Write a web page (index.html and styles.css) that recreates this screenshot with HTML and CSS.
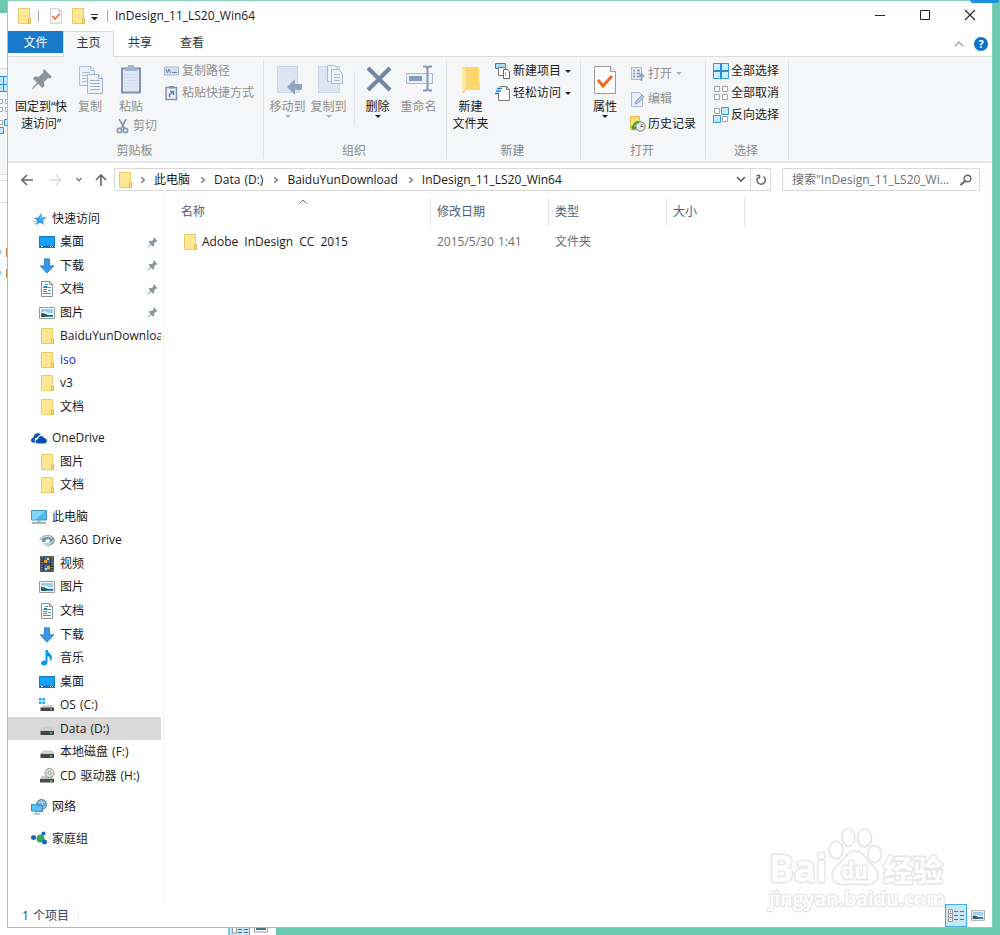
FILE: index.html
```
<!DOCTYPE html>
<html lang="zh-CN">
<head>
    <meta charset="UTF-8">
    <meta name="viewport" content="width=device-width, initial-scale=1.0">
    <title>InDesign_11_LS20_Win64</title>
    <link rel="stylesheet" href="styles.css">
</head>
<body>
    <!-- Shared icons -->
    <svg class="sprite" aria-hidden="true">
        <symbol id="folder" viewBox="0 0 16 16">
            <path d="M2.500.5h11v9.500l1 1v4.500h-12z" fill="#ffe793" stroke="#eccb67"/>
            <path d="M12.500 15.500v-4.500l1-1 1 1v4.500z" fill="#ffe082" stroke="#dfb84c"/>
        </symbol>
        <symbol id="pin" viewBox="0 0 16 16">
            <path d="M10 .5l5.500 5.500-1.500 1-1-.3-2.700 2.700.3 3-1.800 1.600-2.800-2.900L2 15l-1.500.8.7-1.500 3.900-4.200L2.300 7.300l1.700-1.800 3.200.2 2.500-2.600L9 2z" fill="#8b979f"/>
        </symbol>
        <symbol id="desktop" viewBox="0 0 16 16">
            <path d="M.5 2.500h15v11H.5z" fill="#16a1fa" stroke="#0878c7"/>
            <path d="M1 12.500h14" stroke="#0860ae"/>
            <path d="M2 12.500h2M11 12.500h1M13 12.500h1" stroke="#fff"/>
        </symbol>
        <symbol id="download" viewBox="0 0 16 16">
            <path d="M5 .5h6v7h4.500L8 15.500.5 7.500H5z" fill="#3997e5"/>
            <path d="M5.500 1h5v7h4L8 15 1.500 8h4z" fill="none" stroke="#2581d1" stroke-width=".7"/>
        </symbol>
        <symbol id="document" viewBox="0 0 16 16">
            <path d="M2.500.5h8l3 3v12h-11z" fill="#fff" stroke="#8d9295"/>
            <path d="M10.500.5v3h3" fill="none" stroke="#8d9295"/>
            <path d="M6 3.500h3M4 6.500h8M4 8.500h4M4 10.500h4M4 12.500h8M9 9.500h3" stroke="#3796ce"/>
            <path d="M5 5.500h3" stroke="#1d6fa8"/>
        </symbol>
        <symbol id="picture" viewBox="0 0 16 16">
            <path d="M.5 2.500h15v11H.5z" fill="#fff" stroke="#999"/>
            <path d="M2 4h12v8H2z" fill="#9bcdf4"/>
            <path d="M2 7.500l4-1 4 1.500 4 .5V10H2z" fill="#e3f3fb"/>
            <path d="M2 8l3 .3 4 1.700h5v2H2z" fill="#285f64"/>
            <path d="M8 11.500h6" stroke="#3b88c2"/>
        </symbol>
        <symbol id="onedrive" viewBox="0 0 16 16">
            <path d="M1.500 12.500C-1 11-.2 7.800 2.500 7.700 2.500 4 7.500 1.600 10 5c-2-.2-3.200.8-3.700 2.500C3.500 7.300 3 11 4.700 12.700z" fill="#0a50b4"/>
            <path d="M6.500 13.500c-2.600-.3-2.400-4.300.6-4.600.3-3.600 5-4 6-.8 3.500.2 3.700 5.400.4 5.400z" fill="#0a50b4"/>
        </symbol>
        <symbol id="computer" viewBox="0 0 16 16">
            <path d="M.5 1.500h15v9.500H.5z" fill="#4abaf3" stroke="#4b92bd"/>
            <path d="M1 2h13L5 10.500H1z" fill="#80d6fb"/>
            <path d="M6 11.500h4v1.500H6z" fill="#a4b5c0"/>
            <path d="M1 14h14" stroke="#8096a3" stroke-width="1.400"/>
        </symbol>
        <symbol id="a360" viewBox="0 0 16 16">
            <path d="M0 7.500C4 2 11 2 14 5c3 3 2 7-3 8.500-3 .8-5.500-.5-7-2 4 .5 7-.5 7-2.500 0-1.500-1.500-2-3-1.500C6 8 6 9 7 10 3 11 2 9 3 7.500z" fill="#7099ac"/>
            <path d="M1 7c5-4 10-3 12-1M5 12c5 1 9-1 9-4" fill="none" stroke="#c2d9e0" stroke-width="1.500"/>
        </symbol>
        <symbol id="video" viewBox="0 0 16 16">
            <path d="M1.500.5h13v15h-13z" fill="#333c45" stroke="#555"/>
            <path d="M3 1v14M13 1v14" stroke="#ddd" stroke-dasharray="1 1.500"/>
            <path d="M5 1h6v6H5zM5 8.500h6V15H5z" fill="#346bb8"/>
            <path d="M5 4h3v3H5zM8 10h3v3H8z" fill="#e7a736"/>
            <path d="M8 2h2v2H8zM6 12h2v2H6z" fill="#f2dd56"/>
        </symbol>
        <symbol id="music" viewBox="0 0 16 16">
            <path d="M6.500 0h2c.3 3 4.500 4 4.500 7.500 0 2-1 3.200-2 4 .8-3.200-.5-5-2.500-5.500V12c0 4.500-6.500 4.500-6.500 1.300 0-2 2.500-3.300 4.500-2.500z" fill="#0b97ec"/>
        </symbol>
        <symbol id="drive" viewBox="0 0 16 16">
            <path d="M4 7h9l2 3H1.500z" fill="#d6d6d6" stroke="#aaa" stroke-width=".5"/>
            <path d="M1.500 10H15v4H1.500z" fill="#454545"/>
            <path d="M11 12h2" stroke="#37e34d" stroke-width="1.500"/>
        </symbol>
        <symbol id="osdrive" viewBox="0 0 16 16">
            <path d="M0 1h2.600v2.600H0zM3.400 1H6v2.600H3.400zM0 4.400h2.600V7H0zM3.400 4.400H6V7H3.400z" fill="#11b0f1"/>
            <path d="M4 8h9l2 2.500H1.500z" fill="#d2d2d2"/>
            <path d="M1.500 10.500H15V14H1.500z" fill="#454545"/>
            <path d="M11 12.500h2" stroke="#37e34d" stroke-width="1.500"/>
        </symbol>
        <symbol id="cd" viewBox="0 0 16 16">
            <path d="M3 8h10l2 3H1z" fill="#c4c4c4"/>
            <circle cx="10.500" cy="5" r="4.500" fill="#dedede" stroke="#999"/>
            <circle cx="10.500" cy="5" r="1.500" fill="#fff" stroke="#999"/>
            <path d="M1 11h14v3.500H1z" fill="#4b4b4b"/>
            <path d="M11 13h2" stroke="#37e34d" stroke-width="1.500"/>
        </symbol>
        <symbol id="network" viewBox="0 0 16 16">
            <circle cx="10.500" cy="5.500" r="5" fill="#71a8c9" stroke="#4b86aa"/>
            <path d="M7 3c3 1 5-1 7 1M10 1c2 3 1 6 3 8" fill="none" stroke="#c1e1ed"/>
            <path d="M.5 5.500l11 1v6l-11-.5z" fill="#5ac0f3" stroke="#3a83b7"/>
            <path d="M5 12.500v2M3 15h6" stroke="#7895a6"/>
        </symbol>
        <symbol id="homegroup" viewBox="0 0 16 16">
            <path d="M2.500 6.500L10 8l2.500-5.500M10 8l3 4" stroke="#b6c4cd" fill="none"/>
            <circle cx="2.500" cy="6.500" r="2.500" fill="#1968bb"/>
            <circle cx="12.500" cy="2.500" r="2" fill="#1968bb"/>
            <circle cx="9.500" cy="7.500" r="4" fill="#37a854"/>
            <circle cx="13.500" cy="11" r="2.500" fill="#1968bb"/>
        </symbol>
        <symbol id="star" viewBox="0 0 16 16">
            <path d="M10 2l1.100 4 4.400.5-3.500 2.700 1 4.800-4-2.500-4.300 2.700 1.300-4.400L3 7l4.300-.6z" fill="#2b9fe8"/>
            <path d="M10 2l1.100 4 4.400.5L8.500 9z" fill="#56bcf8"/>
            <path d="M2 10.500h3M3 12.500h2" stroke="#8bcdf4"/>
        </symbol>
        <symbol id="chevron" viewBox="0 0 6 8">
            <path d="M1.200 1.200L4.200 4l-3 2.800" fill="none" stroke="#777" stroke-width="1.400"/>
        </symbol>
        <symbol id="check" viewBox="0 0 24 30">
            <path d="M1.500 1.500h16l5 5v22h-21z" fill="#fcfcfc" stroke="#999"/>
            <path d="M17.500 1.500v5h5" fill="#eee" stroke="#999"/>
            <path d="M5 15l5 6 9-10" fill="none" stroke="#f0641e" stroke-width="2.800"/>
        </symbol>
    </svg>

    <!-- Window behind -->
    <div class="back-window">
        <div class="back-title"></div>
        <div class="back-ribbon">
            <svg width="7" height="66" viewBox="0 0 7 66">
                <path d="M0 7h7v16H0z" fill="#bfe5fc"/>
                <path d="M0 7.500h7M0 15.500h7M0 22.500h7M3.500 7v16" stroke="#2793df"/>
                <path d="M-1 30.500h3.500v4H-1zM5.500 30.500h4v4h-4zM-1 38.500h3.500v4H-1zM5.500 38.500h4v4h-4zM-1 51.500h3.500v4H-1z" fill="#fff" stroke="#aaa"/>
                <path d="M4.500 50.500h5v6h-5zM-1 58.500h4.500v6H-1z" fill="#c7e8fb" stroke="#2793df"/>
            </svg>
        </div>
        <div class="back-address"></div>
        <div class="back-files">
            <svg width="7" height="34" viewBox="0 0 7 34">
                <circle cx="-1" cy="6" r="2.500" fill="#8dc9ee"/>
                <circle cx="-1" cy="27" r="2.500" fill="#8dc9ee"/>
                <path d="M6 2h1v9H6zM6 23h1v9H6z" fill="#c28a4d"/>
            </svg>
        </div>
        <div class="back-status">
            <svg width="48" height="7" viewBox="0 0 48 7">
                <path d="M0 0h22v7H0z" fill="#c7e6f4"/>
                <path d="M1 0v7M21.500 0v7" stroke="#42aee4"/>
                <path d="M4.500-1h4v6h-4z" fill="#fff" stroke="#999"/>
                <path d="M10 4.500h4M16 4.500h4M10 1.500h4M16 1.500h4" stroke="#667"/>
                <path d="M26.500-1h13v5h-13z" fill="#fff" stroke="#999"/>
                <path d="M28 0h10v2H28z" fill="#41718c"/>
            </svg>
        </div>
    </div>
    <div class="blue-tab"></div>

    <div class="window">
        <div class="titlebar">
            <svg class="icon" width="16" height="16"><use href="#folder"/></svg>
            <span class="title-sep"></span>
            <svg class="title-check" width="14" height="16"><use href="#check"/></svg>
            <svg class="icon" width="16" height="16"><use href="#folder"/></svg>
            <svg class="title-more" width="7" height="7" viewBox="0 0 7 7"><path d="M0 .5h7" stroke="#333"/><path d="M0 3h7L3.500 6.500z" fill="#222"/></svg>
            <span class="title-sep"></span>
            <span class="title-text">InDesign_11_LS20_Win64</span>
            <div class="window-buttons">
                <svg width="12" height="12" viewBox="0 0 12 12"><path d="M1 6.500h10" stroke="#222"/></svg>
                <svg width="12" height="12" viewBox="0 0 12 12"><path d="M1.500 1.500h9v9h-9z" fill="none" stroke="#222"/></svg>
                <svg width="12" height="12" viewBox="0 0 12 12"><path d="M1 1l10 10M11 1L1 11" stroke="#222" stroke-width="1.100"/></svg>
            </div>
        </div>

        <div class="tabs">
            <div class="tab tab-file">文件</div>
            <div class="tab tab-active">主页</div>
            <div class="tab">共享</div>
            <div class="tab">查看</div>
            <div class="tabs-right">
                <svg width="10" height="6" viewBox="0 0 10 6"><path d="M1 5l4-4 4 4" fill="none" stroke="#999" stroke-width="1.200"/></svg>
                <span class="help">?</span>
            </div>
        </div>

        <div class="ribbon">
            <div class="group group-clipboard">
                <div class="group-body">
                    <div class="big-button">
                        <svg width="24" height="30" viewBox="0 0 24 30"><path d="M15 4l8 8-2 1.500-2-.4-4 4 .4 4-2.100 2-4.200-4.400L4 24l-1 .5.500-1.500L8 17.500l-4.200-4 2-2 4 .2 4.500-4.300L14 5.500z" fill="#89959e"/></svg>
                        <span>固定到“快<br>速访问”</span>
                    </div>
                    <div class="big-button disabled">
                        <svg class="shift-icon" width="26" height="30" viewBox="0 0 26 30">
                            <path d="M1.500 1.500h11l4 4v15h-15z" fill="#edf3fa" stroke="#a9bcd8"/>
                            <path d="M12.500 1.500v4h4M4 7.500h8M4 10.500h8M4 13.500h8M4 16.500h6" fill="none" stroke="#a9bcd8"/>
                            <path d="M9.500 9.500h11l4 4v15h-15z" fill="#edf3fa" stroke="#a2b4d0"/>
                            <path d="M20.500 9.500v4h4M12 15.500h10M12 18.500h10M12 21.500h10M12 24.500h10" fill="none" stroke="#9eb3d3"/>
                        </svg>
                        <span>复制</span>
                    </div>
                    <div class="paste-column disabled">
                        <div class="big-button">
                            <svg width="22" height="30" viewBox="0 0 22 30">
                                <path d="M2 3.500h18v24H2z" fill="#dde8f4" stroke="#7f93b5" stroke-width="2"/>
                                <path d="M4 9.500h14M4 12.500h14M4 15.500h14M4 18.500h14M4 21.500h14" stroke="#cfddee"/>
                                <path d="M5 2h3V0h6v2h3v4H5z" fill="#a4b6cf"/>
                            </svg>
                            <span>粘贴</span>
                        </div>
                        <div class="small-button cut">
                            <svg width="14" height="16" viewBox="0 0 14 16"><path d="M3 1l6 10M10 1L5 11" stroke="#8699b9" stroke-width="1.700"/><circle cx="3.500" cy="12.500" r="2.200" fill="none" stroke="#8699b9" stroke-width="1.700"/><circle cx="9.500" cy="12.500" r="2.200" fill="none" stroke="#8699b9" stroke-width="1.700"/></svg>
                            <span>剪切</span>
                        </div>
                    </div>
                    <div class="button-list disabled">
                        <div class="small-button">
                            <svg width="16" height="16" viewBox="0 0 16 16"><path d="M.5 4h14v8H.5z" fill="#d5e1f0" stroke="#a7b7cf"/><path d="M2 6l1.500 4L5 6l1.500 4M8 9.500h5" fill="none" stroke="#6e83a6"/></svg>
                            <span>复制路径</span>
                        </div>
                        <div class="small-button">
                            <svg width="16" height="16" viewBox="0 0 16 16"><path d="M2 2.500h10.500v12H2z" fill="#e8eff7" stroke="#8095b7" stroke-width="1.500"/><path d="M5 1h5v2.500H5z" fill="#8095b7"/><path d="M5.500 12V9.500l3-2M6 6.500h3.500v3.500" fill="none" stroke="#617ba5" stroke-width="1.500"/></svg>
                            <span>粘贴快捷方式</span>
                        </div>
                    </div>
                </div>
                <div class="group-label">剪贴板</div>
            </div>

            <div class="group group-organize">
                <div class="group-body">
                    <div class="big-button disabled">
                        <svg width="28" height="30" viewBox="0 0 28 30"><path d="M3.500 1.500h20v16l2 3v7h-22z" fill="#dce6f3" stroke="#c8d6e9"/><path d="M13 22l8-8v5h7v6h-7v5z" fill="#93a4c2"/></svg>
                        <span>移动到</span>
                        <i class="arrow"></i>
                    </div>
                    <div class="big-button disabled">
                        <svg width="28" height="30" viewBox="0 0 28 30"><path d="M3.500 1.500h21v26h-21z" fill="#dce6f3" stroke="#c8d6e9"/><path d="M12.500.5h7l3 3v13h-10z" fill="#edf3fa" stroke="#a9bad3"/><path d="M16.500 4.500h7l4 4v10h-11z" fill="#edf3fa" stroke="#a9bad3"/><path d="M19 9.500h6M19 12.500h6M19 15.500h6" stroke="#a9bad3"/></svg>
                        <span>复制到</span>
                        <i class="arrow"></i>
                    </div>
                    <div class="body-sep"></div>
                    <div class="big-button">
                        <svg width="28" height="30" viewBox="0 0 28 30"><path d="M4 3l22 22M26 3L4 25" stroke="#7486a7" stroke-width="4"/></svg>
                        <span>删除</span>
                        <i class="arrow"></i>
                    </div>
                    <div class="big-button disabled">
                        <svg width="30" height="30" viewBox="0 0 30 30"><path d="M2.500 8.500h26v10h-26z" fill="#e8f0f8" stroke="#a3b6d2"/><path d="M5 11h13v5H5z" fill="#869bbd"/><path d="M19 1.500h3l1.500 1.500L25 1.500h3M23.500 3v21M19 25.500h3l1.500-1.500 1.500 1.500h3" fill="none" stroke="#8397b9" stroke-width="2"/></svg>
                        <span>重命名</span>
                    </div>
                </div>
                <div class="group-label">组织</div>
            </div>

            <div class="group group-new">
                <div class="group-body">
                    <div class="big-button">
                        <svg width="22" height="30" viewBox="0 0 22 30"><path d="M2 2h17v15l1 1v7H2z" fill="#ffd66b"/><path d="M2 2l6 4v18l-6 4z" fill="#ffe9a8"/><path d="M7 5v18l-4 5" fill="none" stroke="#ebc35a"/></svg>
                        <span>新建<br>文件夹</span>
                    </div>
                    <div class="button-list">
                        <div class="small-button">
                            <svg width="16" height="16" viewBox="0 0 16 16"><path d="M.5.5h10v5H.500z" fill="#a8daf1" stroke="#3a87ad"/><path d="M3.500 4.500h6l1 1v7h-7z" fill="#fff" stroke="#777"/><path d="M8.500 6.500h4l2 2v7h-6z" fill="#fff" stroke="#666"/><path d="M10.500 9v4" stroke="#e69a83"/></svg>
                            <span>新建项目</span>
                            <i class="arrow"></i>
                        </div>
                        <div class="small-button">
                            <svg width="16" height="16" viewBox="0 0 16 16"><path d="M4.500 1.500h7l3 3v11h-11V9" fill="#fff" stroke="#777"/><path d="M11.500 1.500v3h3" fill="none" stroke="#777"/><path d="M2 3.500h5M1 6h5M0 8.500h4" stroke="#237cc7" stroke-width="1.300"/></svg>
                            <span>轻松访问</span>
                            <i class="arrow"></i>
                        </div>
                    </div>
                </div>
                <div class="group-label">新建</div>
            </div>

            <div class="group group-open">
                <div class="group-body">
                    <div class="big-button">
                        <svg width="24" height="30"><use href="#check"/></svg>
                        <span>属性</span>
                        <i class="arrow"></i>
                    </div>
                    <div class="button-list">
                        <div class="small-button disabled">
                            <svg width="16" height="16" viewBox="0 0 16 16"><path d="M1.500 1.500h10v12h-10z" fill="#e3ebf5" stroke="#a9b9d0"/><path d="M3 4.500h2M7 4.500h3M3 7.500h2M7 7.500h3M3 10.500h2M7 10.500h2" stroke="#8196b7" stroke-width="1.500"/><path d="M11.500 15V9M9 11l2.500-3 2.500 3" fill="none" stroke="#8aa0c2" stroke-width="1.800"/></svg>
                            <span>打开</span>
                            <i class="arrow"></i>
                        </div>
                        <div class="small-button disabled">
                            <svg width="16" height="16" viewBox="0 0 16 16"><path d="M1.500 1.500h8l3 3v11h-11z" fill="#e8eff8" stroke="#a6b7d0"/><path d="M5 13l1-3 6-6 2 2-6 6z" fill="#b6c7df" stroke="#91a6c7"/></svg>
                            <span>编辑</span>
                        </div>
                        <div class="small-button">
                            <svg width="16" height="16" viewBox="0 0 16 16"><path d="M.5.5h9v4l1 1v8H.5z" fill="#ffdf76" stroke="#e3b947"/><circle cx="10.500" cy="10.500" r="4.700" fill="#e9e9e9" stroke="#777"/><path d="M10.500 10.500l2-2.500M10.500 10.500h3" stroke="#666"/><path d="M3 12c0-4 3-6.500 6-5.500M2 10l1.500 3L6 11" fill="none" stroke="#30a62b" stroke-width="2"/></svg>
                            <span>历史记录</span>
                        </div>
                    </div>
                </div>
                <div class="group-label">打开</div>
            </div>

            <div class="group group-select">
                <div class="group-body">
                    <div class="button-list">
                        <div class="small-button">
                            <svg width="16" height="16" viewBox="0 0 16 16"><path d="M.5.5h15v15H.5z" fill="#d2ecfb" stroke="#3599dc"/><path d="M8 0v16M0 8h16" stroke="#2391de" stroke-width="2"/></svg>
                            <span>全部选择</span>
                        </div>
                        <div class="small-button">
                            <svg width="16" height="16" viewBox="0 0 16 16"><path d="M1.500 1.500h5v5h-5zM9.500 1.500h5v5h-5zM1.500 9.500h5v5h-5zM9.500 9.500h5v5h-5z" fill="#fff" stroke="#a2a2a2"/></svg>
                            <span>全部取消</span>
                        </div>
                        <div class="small-button">
                            <svg width="16" height="16" viewBox="0 0 16 16"><path d="M1.500 1.500h5v5h-5zM9.500 9.500h5v5h-5z" fill="#fff" stroke="#a2a2a2"/><path d="M8.500.5h7v7h-7zM.5 8.500h7v7h-7z" fill="#c6e6fa" stroke="#3599dc"/></svg>
                            <span>反向选择</span>
                        </div>
                    </div>
                </div>
                <div class="group-label">选择</div>
            </div>
        </div>

        <div class="address-row">
            <div class="nav-buttons">
                <svg width="12" height="12" viewBox="0 0 12 12"><path d="M12 6H1M6 1L1 6l5 5" fill="none" stroke="#666" stroke-width="1.600"/></svg>
                <svg width="12" height="12" viewBox="0 0 12 12"><path d="M0 6h11M6 1l5 5-5 5" fill="none" stroke="#ddd" stroke-width="1.500"/></svg>
                <svg width="6" height="5" viewBox="0 0 6 5"><path d="M.5 1L3 3.700 5.500 1" fill="none" stroke="#777" stroke-width="1.300"/></svg>
                <svg width="12" height="12" viewBox="0 0 12 12"><path d="M6 12V1M1 6l5-5 5 5" fill="none" stroke="#666" stroke-width="1.600"/></svg>
            </div>
            <div class="address">
                <svg class="icon" width="16" height="16"><use href="#folder"/></svg>
                <svg class="crumb-arrow" width="6" height="8"><use href="#chevron"/></svg>
                <span>此电脑</span>
                <svg class="crumb-arrow" width="6" height="8"><use href="#chevron"/></svg>
                <span>Data (D:)</span>
                <svg class="crumb-arrow" width="6" height="8"><use href="#chevron"/></svg>
                <span>BaiduYunDownload</span>
                <svg class="crumb-arrow" width="6" height="8"><use href="#chevron"/></svg>
                <span>InDesign_11_LS20_Win64</span>
                <div class="address-drop">
                    <svg width="10" height="7" viewBox="0 0 10 7"><path d="M1 1l4 4 4-4" fill="none" stroke="#666" stroke-width="1.700"/></svg>
                </div>
                <div class="refresh">
                    <svg width="12" height="12" viewBox="0 0 12 12"><path d="M8.500 2.500A4.200 4.200 0 1 1 3 3.200M1.500 1.500h3v3.200" fill="none" stroke="#666" stroke-width="1.500"/></svg>
                </div>
            </div>
            <div class="search">
                <span>搜索"InDesign_11_LS20_Wi...</span>
                <svg width="12" height="12" viewBox="0 0 12 12"><circle cx="7.500" cy="4.500" r="3.300" fill="none" stroke="#666" stroke-width="1.400"/><path d="M5 7l-4.500 4" stroke="#666" stroke-width="1.900"/></svg>
            </div>
        </div>

        <div class="main">
            <div class="sidebar">
                <div class="section">
                    <div class="nav-item root"><svg class="icon"><use href="#star"/></svg><span>快速访问</span></div>
                    <div class="nav-item"><svg class="icon"><use href="#desktop"/></svg><span>桌面</span><svg class="nav-pin"><use href="#pin"/></svg></div>
                    <div class="nav-item"><svg class="icon"><use href="#download"/></svg><span>下载</span><svg class="nav-pin"><use href="#pin"/></svg></div>
                    <div class="nav-item"><svg class="icon"><use href="#document"/></svg><span>文档</span><svg class="nav-pin"><use href="#pin"/></svg></div>
                    <div class="nav-item"><svg class="icon"><use href="#picture"/></svg><span>图片</span><svg class="nav-pin"><use href="#pin"/></svg></div>
                    <div class="nav-item"><svg class="icon"><use href="#folder"/></svg><span>BaiduYunDownload</span></div>
                    <div class="nav-item compressed"><svg class="icon"><use href="#folder"/></svg><span>iso</span></div>
                    <div class="nav-item"><svg class="icon"><use href="#folder"/></svg><span>v3</span></div>
                    <div class="nav-item"><svg class="icon"><use href="#folder"/></svg><span>文档</span></div>
                </div>
                <div class="section">
                    <div class="nav-item root"><svg class="icon"><use href="#onedrive"/></svg><span>OneDrive</span></div>
                    <div class="nav-item"><svg class="icon"><use href="#folder"/></svg><span>图片</span></div>
                    <div class="nav-item"><svg class="icon"><use href="#folder"/></svg><span>文档</span></div>
                </div>
                <div class="section">
                    <div class="nav-item root"><svg class="icon"><use href="#computer"/></svg><span>此电脑</span></div>
                    <div class="nav-item"><svg class="icon"><use href="#a360"/></svg><span>A360 Drive</span></div>
                    <div class="nav-item"><svg class="icon"><use href="#video"/></svg><span>视频</span></div>
                    <div class="nav-item"><svg class="icon"><use href="#picture"/></svg><span>图片</span></div>
                    <div class="nav-item"><svg class="icon"><use href="#document"/></svg><span>文档</span></div>
                    <div class="nav-item"><svg class="icon"><use href="#download"/></svg><span>下载</span></div>
                    <div class="nav-item"><svg class="icon"><use href="#music"/></svg><span>音乐</span></div>
                    <div class="nav-item"><svg class="icon"><use href="#desktop"/></svg><span>桌面</span></div>
                    <div class="nav-item"><svg class="icon"><use href="#osdrive"/></svg><span>OS (C:)</span></div>
                    <div class="nav-item selected"><svg class="icon"><use href="#drive"/></svg><span>Data (D:)</span></div>
                    <div class="nav-item"><svg class="icon"><use href="#drive"/></svg><span>本地磁盘 (F:)</span></div>
                    <div class="nav-item"><svg class="icon"><use href="#cd"/></svg><span>CD 驱动器 (H:)</span></div>
                </div>
                <div class="section">
                    <div class="nav-item root"><svg class="icon"><use href="#network"/></svg><span>网络</span></div>
                </div>
                <div class="section">
                    <div class="nav-item root"><svg class="icon"><use href="#homegroup"/></svg><span>家庭组</span></div>
                </div>
            </div>

            <div class="files">
                <div class="file-row file-header">
                    <div class="col">名称
                        <svg class="sort-caret" width="8" height="5" viewBox="0 0 8 5"><path d="M.5 4.500L4 1l3.500 3.500" fill="none" stroke="#777"/></svg>
                    </div>
                    <div class="col">修改日期</div>
                    <div class="col">类型</div>
                    <div class="col">大小</div>
                </div>
                <div class="file-row">
                    <div class="col name"><svg class="icon"><use href="#folder"/></svg><span>Adobe InDesign CC 2015</span></div>
                    <div class="col">2015/5/30 1:41</div>
                    <div class="col">文件夹</div>
                    <div class="col"></div>
                </div>
            </div>
        </div>

        <div class="status">
            <span class="status-text">1 个项目</span>
            <div class="view-buttons">
                <div class="view-button active">
                    <svg width="16" height="14" viewBox="0 0 16 14"><path d="M.5.500h4v12h-4zM.500 4.500h4M.500 8.500h4" fill="#fff" stroke="#999"/><path d="M2 2.500h1M2 6.500h1" stroke="#4a7aa8"/><path d="M2 10.500h1" stroke="#e04c3a"/><path d="M6 2.500h4M12 2.500h4M6 6.500h4M12 6.500h4M6 10.500h4M12 10.500h4" stroke="#68727a" stroke-width="1.200"/></svg>
                </div>
                <div class="view-button"><svg width="14" height="15"><use href="#picture"/></svg></div>
            </div>
        </div>
    </div>

    <svg class="watermark" width="190" height="100" viewBox="0 0 190 100">
        <g fill="#fff" stroke="#e4e4e4" stroke-width="1.600">
            <ellipse cx="76" cy="40" rx="7" ry="9"/>
            <ellipse cx="88.500" cy="27" rx="6.500" ry="9"/>
            <ellipse cx="104.500" cy="28" rx="7" ry="9"/>
            <ellipse cx="114.500" cy="44" rx="7" ry="8.500"/>
            <path d="M95 41c8 0 10 7 15 12 6 5 10 9 7 16-3 7-11 6-22 5-11 1-19 2-22-5-3-7 1-11 7-16 5-5 7-12 15-12z"/>
        </g>
        <g class="mark-text">
            <text x="9" y="72" font-size="38" textLength="58" lengthAdjust="spacingAndGlyphs">Bai</text>
            <text x="81" y="69" font-size="24" textLength="27" lengthAdjust="spacingAndGlyphs">du</text>
            <text x="123" y="71" font-size="30" textLength="60" lengthAdjust="spacingAndGlyphs">经验</text>
            <text x="9" y="96" font-size="20" textLength="176" lengthAdjust="spacingAndGlyphs" class="mark-url">jingyan.baidu.com</text>
        </g>
    </svg>
</body>
</html>
```
FILE: styles.css
```
* {
    box-sizing: border-box;
}

body {
    position: relative;
    width: 1000px;
    height: 935px;
    margin: 0;
    overflow: hidden;
    background: #6bc8b1;
    font-family: "Open Sans", "Noto Sans CJK SC", sans-serif;
    font-size: 12px;
    line-height: 16px;
    word-spacing: 1px;
    color: #1a1a1a;
}

svg {
    display: block;
    flex: none;
}

.sprite {
    position: absolute;
    width: 0;
    height: 0;
}

.icon {
    width: 16px;
    height: 16px;
}

/* Window behind */
.back-window {
    position: absolute;
    left: 0;
    top: 13px;
    width: 276px;
    height: 922px;
    background: #fff;
    display: flex;
    flex-direction: column;
}

.back-title {
    height: 55px;
}

.back-ribbon {
    height: 107px;
    background: #f5f6f7;
    border-top: 1px solid #dadbdc;
    border-bottom: 1px solid #dadbdc;
}

.back-address {
    height: 23px;
    margin-top: 5px;
    border-top: 1px solid #d9d9d9;
    border-bottom: 1px solid #d9d9d9;
}

.back-files {
    flex: 1;
    padding-top: 43px;
}

.back-status {
    height: 7px;
    padding-left: 228px;
}

.blue-tab {
    position: absolute;
    left: 970px;
    top: 0;
    width: 29px;
    height: 3px;
    background: #1a8ee0;
    border-radius: 0 0 3px 3px;
    z-index: 2;
}

/* Main window */
.window {
    position: absolute;
    left: 7px;
    top: 0;
    width: 986px;
    height: 928px;
    background: #fff;
    border: 1px solid #86cfb9;
    display: flex;
    flex-direction: column;
}

.titlebar {
    height: 30px;
    padding-left: 8px;
    display: flex;
    align-items: center;
}

.title-sep {
    width: 1px;
    height: 12px;
    margin: 0 9px 0 6px;
    background: #aaa;
}

.title-check {
    margin: 0 7px 0 1px;
}

.title-more {
    margin: 2px 3px 0 5px;
}

.title-more + .title-sep {
    margin-right: 7px;
}

.title-text {
    margin-top: -1px;
}

.window-buttons {
    display: flex;
    gap: 33px;
    margin-top: -2px;
    margin-left: auto;
    margin-right: 16px;
}

.tabs {
    height: 26px;
    display: flex;
    border-bottom: 1px solid #dadbdc;
}

.tab {
    width: 52px;
    padding-top: 4px;
    text-align: center;
    color: #333;
}

.tab-file {
    width: 55px;
    height: 22px;
    background: #1979ca;
    color: #fff;
}

.tab-active {
    width: 51px;
    height: 27px;
    background: #f5f6f7;
    border: 1px solid #dadbdc;
    border-bottom: none;
    padding-top: 3px;
}

.tabs-right {
    margin-left: auto;
    padding-right: 4px;
    display: flex;
    align-items: center;
    gap: 10px;
}

.help {
    width: 14px;
    height: 14px;
    border-radius: 50%;
    background: #0b74ce;
    color: #fff;
    font-size: 11px;
    font-weight: 700;
    line-height: 14px;
    text-align: center;
}

/* Ribbon */
.ribbon {
    height: 106px;
    background: #f5f6f7;
    border-bottom: 2px solid #e6e8ea;
    display: flex;
    padding: 3px 0 2px;
}

.group {
    display: flex;
    flex-direction: column;
    border-right: 1px solid #e2e3e4;
}

.group-clipboard {
    width: 256px;
}

.group-organize {
    width: 183px;
}

.group-new {
    width: 134px;
}

.group-open {
    width: 125px;
}

.group-select {
    width: 83px;
}

.group-body {
    flex: 1;
    display: flex;
}

.group-label {
    height: 17px;
    padding-right: 2px;
    text-align: center;
    line-height: 17px;
    color: #8a8a8a;
}

.big-button {
    width: 41px;
    padding-top: 5px;
    display: flex;
    flex-direction: column;
    align-items: center;
    text-align: center;
    line-height: 17px;
    white-space: nowrap;
}

.big-button span {
    margin-top: 3px;
}

.disabled {
    color: #8f8f8f;
}

.arrow {
    border: 3px solid transparent;
    border-top-color: #222;
    border-bottom: none;
}

.disabled .arrow {
    border-top-color: #b4b4b4;
}

.small-button {
    height: 22px;
    display: flex;
    align-items: center;
    gap: 2px;
    white-space: nowrap;
}

.small-button .arrow {
    margin-left: 2px;
}

.group-clipboard .big-button:first-child {
    width: 66px;
}

.group-clipboard .big-button.disabled {
    width: 32px;
}

.paste-column {
    width: 52px;
}

.paste-column .big-button:first-child {
    width: 50px;
}

.shift-icon {
    margin-left: 2px;
}

.cut {
    padding-left: 10px;
    gap: 3px;
}

.button-list {
    padding-top: 0;
}

.group-clipboard .button-list {
    margin-left: 6px;
}

.group-organize .group-body {
    padding-left: 3px;
}

.body-sep {
    width: 1px;
    height: 55px;
    margin: 11px 2px 0 5px;
    background: #e2e3e4;
}

.group-new .big-button {
    width: 47px;
}

.group-new .button-list {
    margin-left: 1px;
}

.group-open .big-button {
    width: 48px;
}

.group-open .button-list {
    padding-top: 1px;
    padding-left: 1px;
}

.group-open .small-button {
    height: 25px;
}

.group-select .button-list {
    padding-left: 7px;
}

/* Address bar */
.address-row {
    height: 33px;
    display: flex;
    align-items: center;
}

.nav-buttons {
    width: 106px;
    padding-left: 13px;
    display: flex;
    align-items: center;
    gap: 14px;
}

.nav-buttons svg:nth-child(1) {
    margin-right: 3px;
}

.nav-buttons svg:nth-child(4) {
    margin-left: -1px;
}

.address {
    width: 657px;
    height: 23px;
    border: 1px solid #d9d9d9;
    display: flex;
    align-items: center;
    padding-left: 2px;
    white-space: nowrap;
}

.crumb-arrow {
    margin: 0 8px 0 10px;
}

.icon + .crumb-arrow {
    margin-left: 7px;
}

.address-drop {
    margin-left: auto;
    margin-right: 4px;
}

.refresh {
    width: 20px;
    height: 21px;
    border-left: 1px solid #d9d9d9;
    display: flex;
    align-items: center;
    justify-content: center;
}

.search {
    width: 198px;
    height: 23px;
    margin-left: 11px;
    border: 1px solid #d9d9d9;
    padding: 0 7px 0 9px;
    display: flex;
    align-items: center;
    justify-content: space-between;
    color: #6d6d6d;
    white-space: nowrap;
}

/* Navigation pane */
.main {
    flex: 1;
    display: flex;
    min-height: 0;
}

.sidebar {
    width: 156px;
    border-right: 1px solid #f2f3f4;
    padding-top: 11px;
}

.section {
    margin-bottom: 8px;
}

.nav-item {
    width: 153px;
    height: 23.52px;
    padding-left: 31px;
    display: flex;
    align-items: center;
    gap: 5px;
    overflow: hidden;
    white-space: nowrap;
}

.nav-item.root {
    padding-left: 23px;
}

.nav-item.selected {
    background: #d9d9d9;
}

.nav-item.compressed {
    color: #1c1cf0;
}

.nav-pin {
    width: 11px;
    height: 11px;
    margin-left: auto;
    margin-right: 3px;
}

/* File list */
.files {
    flex: 1;
    padding-top: 2px;
}

.file-row {
    display: grid;
    grid-template-columns: 267px 118px 118px 78px;
    height: 31px;
    color: #6d6d6d;
}

.file-row .col {
    display: flex;
    align-items: center;
    padding-left: 6px;
}

.file-row .col:first-child {
    padding-left: 17px;
}

.file-header {
    height: 28px;
}

.file-header .col {
    position: relative;
    border-right: 1px solid #e5e5e5;
    color: #4c607a;
}

.sort-caret {
    position: absolute;
    left: 135px;
    top: 1px;
}

.file-row .name {
    gap: 4px;
    word-spacing: 3px;
    color: #1a1a1a;
}

.file-row .name.col {
    padding-left: 18px;
}

/* Status bar */
.status {
    height: 23px;
    padding-left: 14px;
    display: flex;
    align-items: center;
    justify-content: space-between;
}

.status-text {
    padding-right: 9px;
    border-right: 1px solid #f0f0f0;
    color: #2f4464;
}

.view-buttons {
    display: flex;
    margin-right: 3px;
}

.view-button {
    width: 22px;
    height: 23px;
    display: flex;
    align-items: center;
    justify-content: center;
}

.view-button.active {
    background: #cbe8f6;
    border: 1px solid #3bb0e8;
}

/* Watermark */
.watermark {
    position: absolute;
    left: 760px;
    top: 810px;
    overflow: visible;
    pointer-events: none;
}

.mark-text {
    font-weight: 700;
    fill: #fff;
    stroke: #e6e6e6;
    stroke-width: 3px;
    stroke-linejoin: round;
    paint-order: stroke;
}

.mark-url {
    font-weight: 600;
    stroke-width: 2.4px;
}
```
